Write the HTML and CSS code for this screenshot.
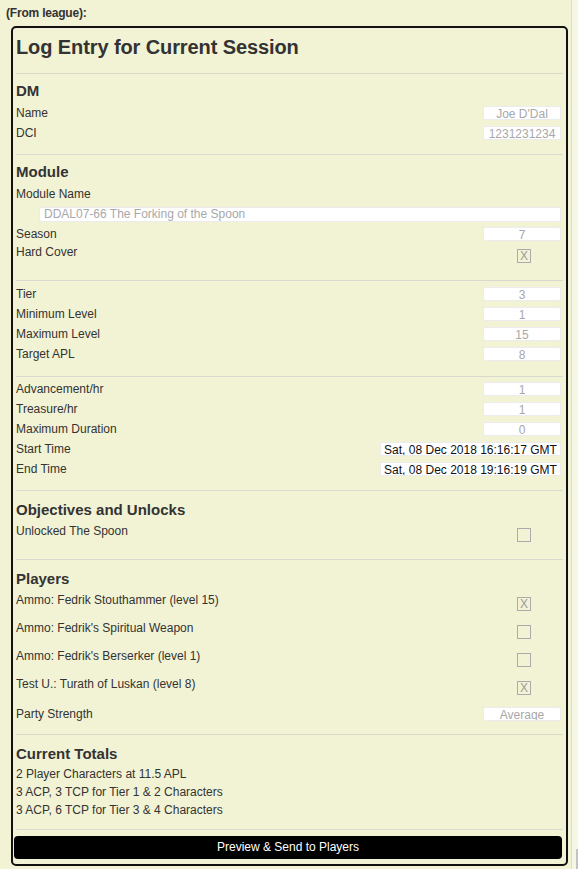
FILE: index.html
```html
<!DOCTYPE html>
<html>
<head>
<meta charset="utf-8">
<title>Log Entry</title>
<link rel="stylesheet" href="styles.css">
</head>
<body>
<div class="page">
  <div class="main">
    <div class="from">(From league):</div>
    <div class="panel">
      <h1 class="title">Log Entry for Current Session</h1>
      <hr class="rule r-title">

      <h2 class="head">DM</h2>
      <div class="row"><span class="lbl">Name</span><span class="inp">Joe D'Dal</span></div>
      <div class="row"><span class="lbl">DCI</span><span class="inp">1231231234</span></div>
      <hr class="rule r-dm">

      <h2 class="head">Module</h2>
      <div class="row"><span class="lbl">Module Name</span></div>
      <div class="row"><span class="inp wide">DDAL07-66 The Forking of the Spoon</span></div>
      <div class="row"><span class="lbl">Season</span><span class="inp">7</span></div>
      <div class="crow"><span class="lbl">Hard Cover</span><span class="cbox">X</span></div>
      <hr class="rule r-hc">

      <div class="group g-tier">
        <div class="row"><span class="lbl">Tier</span><span class="inp">3</span></div>
        <div class="row"><span class="lbl">Minimum Level</span><span class="inp">1</span></div>
        <div class="row"><span class="lbl">Maximum Level</span><span class="inp">15</span></div>
        <div class="row"><span class="lbl">Target APL</span><span class="inp">8</span></div>
      </div>
      <hr class="rule r-tier">

      <div class="group g-adv">
        <div class="row"><span class="lbl">Advancement/hr</span><span class="inp">1</span></div>
        <div class="row"><span class="lbl">Treasure/hr</span><span class="inp">1</span></div>
        <div class="row"><span class="lbl">Maximum Duration</span><span class="inp">0</span></div>
        <div class="row"><span class="lbl">Start Time</span><span class="inp date">Sat, 08 Dec 2018 16:16:17 GMT</span></div>
        <div class="row"><span class="lbl">End Time</span><span class="inp date">Sat, 08 Dec 2018 19:16:19 GMT</span></div>
      </div>
      <hr class="rule r-adv">

      <h2 class="head h-obj">Objectives and Unlocks</h2>
      <div class="crow first"><span class="lbl">Unlocked The Spoon</span><span class="cbox"></span></div>
      <hr class="rule r-obj">

      <h2 class="head h-players">Players</h2>
      <div class="crow first"><span class="lbl">Ammo: Fedrik Stouthammer (level 15)</span><span class="cbox">X</span></div>
      <div class="crow"><span class="lbl">Ammo: Fedrik's Spiritual Weapon</span><span class="cbox"></span></div>
      <div class="crow"><span class="lbl">Ammo: Fedrik's Berserker (level 1)</span><span class="cbox"></span></div>
      <div class="crow"><span class="lbl">Test U.: Turath of Luskan (level 8)</span><span class="cbox">X</span></div>
      <div class="row"><span class="lbl">Party Strength</span><span class="inp">Average</span></div>
      <hr class="rule r-players">

      <h2 class="head h-totals">Current Totals</h2>
      <div class="totals">
        <div class="line">2 Player Characters at 11.5 APL</div>
        <div class="line">3 ACP, 3 TCP for Tier 1 &amp; 2 Characters</div>
        <div class="line">3 ACP, 6 TCP for Tier 3 &amp; 4 Characters</div>
      </div>
      <hr class="rule r-totals">

      <div class="btn">Preview &amp; Send to Players</div>
    </div>
  </div>
  <div class="scroll"><div class="thumb"></div></div>
</div>
</body>
</html>
```

FILE: styles.css
```css
html, body {
  margin: 0;
  padding: 0;
}
body {
  background: #f2f2d4;
  font-family: "Liberation Sans", Arial, sans-serif;
  font-size: 12px;
  color: #333;
  height: 869px;
  overflow: hidden;
}
.page {
  display: flex;
  height: 869px;
}
.main {
  flex: 1;
  min-width: 0;
}
.scroll {
  width: 6px;
  border-left: 1px solid #dcdcd0;
  background: #f7f7e6;
  display: flex;
  flex-direction: column;
  justify-content: flex-end;
  align-items: flex-end;
}
.thumb {
  width: 2px;
  height: 20px;
  background: #c4c4c0;
}
.from {
  font-weight: bold;
  font-size: 12px;
  line-height: 14px;
  padding: 6px 0 0 6px;
  letter-spacing: -0.2px;
}
.panel {
  margin: 6px 0 0 11px;
  border: 2px solid #111;
  border-radius: 5px;
  padding: 0 3px 5px 3px;
  box-sizing: content-box;
  width: 547px;
}
.title {
  margin: 7px 0 0 0;
  font-size: 20px;
  line-height: 24px;
  font-weight: bold;
  color: #333;
  letter-spacing: -0.1px;
}
.rule {
  border: 0;
  border-top: 1px solid #d9d9cf;
  margin: 0;
  height: 0;
}
.r-title { margin-top: 14px; }
.head {
  margin: 7px 0 0 0;
  font-size: 15px;
  line-height: 20px;
  font-weight: bold;
  color: #333;
}
.head + .row { margin-top: 2px; }
.row {
  display: flex;
  align-items: center;
  justify-content: space-between;
  height: 20px;
  padding-right: 2px;
}
.lbl {
  line-height: 16px;
}
.inp {
  margin-left: auto;
  width: 78px;
  height: 14px;
  line-height: 14px;
  background: #fff;
  border: 1px solid #ececec;
  border-radius: 2px;
  box-sizing: border-box;
  text-align: center;
  color: #a8a8a8;
  font-size: 12px;
  white-space: nowrap;
  overflow: hidden;
}
.inp.wide {
  margin-left: 23px;
  flex: 1;
  text-align: left;
  padding-left: 4px;
  height: 15px;
  line-height: 13px;
}
.inp.date {
  width: 181px;
  color: #111;
}
.crow {
  display: flex;
  justify-content: space-between;
  align-items: flex-start;
  height: 28px;
  padding-right: 32px;
}
.crow.first { margin-top: 3px; }
.crow .lbl {
  line-height: 16px;
}
.cbox {
  margin-top: 5px;
  width: 14px;
  height: 14px;
  box-sizing: border-box;
  border: 1px solid #ababab;
  color: #9c9c9c;
  font-size: 12px;
  line-height: 12px;
  text-align: center;
}
.r-dm { margin-top: 11px; }
.r-hc { margin-top: 8px; }
.g-tier { margin-top: 3px; }
.r-tier { margin-top: 12px; }
.g-adv { margin-top: 2px; }
.r-adv { margin-top: 11px; }
.h-obj { margin-top: 9px; }
.r-obj { margin-top: 8px; }
.h-players { margin-top: 9px; }
.r-players { margin-top: 10px; }
.h-totals { margin-top: 9px; }
.totals { margin-top: 1px; }
.line {
  line-height: 18px;
}
.r-totals { margin-top: 10px; }
.btn {
  margin: 6px 0 0 -2px;
  width: 548px;
  height: 23px;
  box-sizing: border-box;
  background: #000;
  color: #fff;
  border-radius: 4px;
  text-align: center;
  line-height: 23px;
}
```
